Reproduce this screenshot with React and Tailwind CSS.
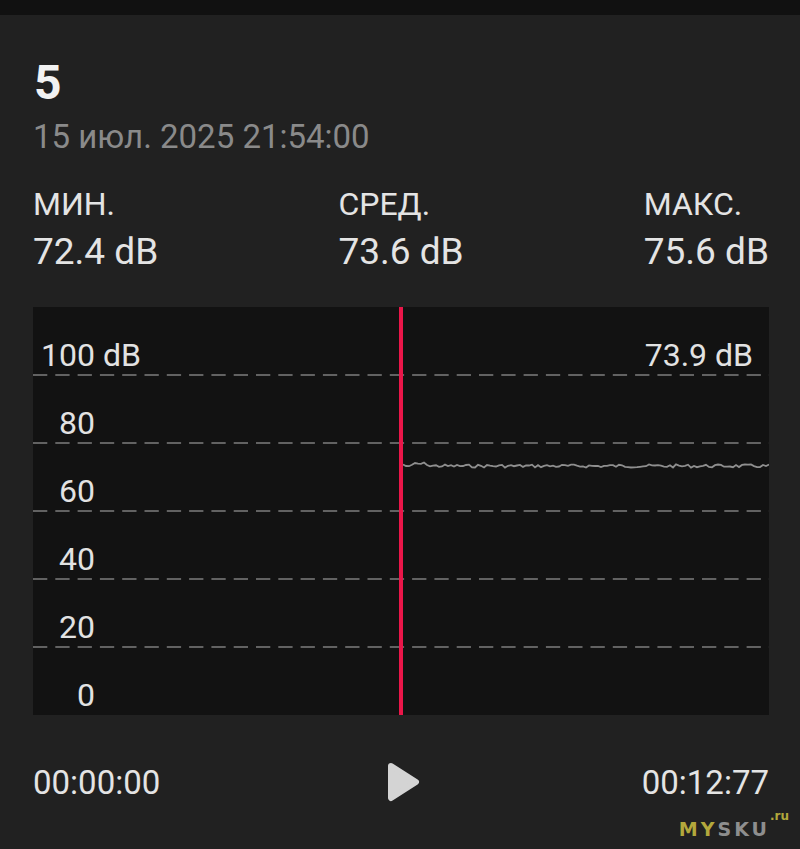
import React from "react";

const font = { fontFamily: "Roboto, 'Noto Sans', sans-serif" };

const levels = ["100", "80", "60", "40", "20", "0"];

function wavePath() {
  // seeded noise so the trace is the same each time
  let seed = 7;
  const rnd = () => {
    seed = (seed * 9301 + 49297) % 233280;
    return seed / 233280;
  };
  let d = "M370 157.5";
  for (let x = 373; x <= 736; x += 3) {
    let y = 159 + (rnd() - 0.5) * 3.2;
    if (x > 380 && x < 395) y -= 2.2;
    d += ` L${x} ${y.toFixed(1)}`;
  }
  return d;
}

function Chart() {
  return (
    <div className="relative h-[408px] bg-[#121212]">
      <svg className="absolute inset-0" width="736" height="408" viewBox="0 0 736 408">
        {[68, 136, 204, 272, 340].map((y) => (
          <line
            key={y}
            x1="0"
            x2="736"
            y1={y}
            y2={y}
            stroke="#7d7d7d"
            strokeWidth="1.5"
            strokeDasharray="14.3 8"
          />
        ))}
        <path d={wavePath()} fill="none" stroke="#8f8f8f" strokeWidth="1.8" />
        <rect x="366" y="0" width="4" height="408" fill="#ea1649" />
      </svg>
      <div className="relative flex flex-col text-[#e2e2e2]">
        {levels.map((v, i) => (
          <div key={v} className="flex h-[68px] items-end pb-[4px] text-[32px] leading-none">
            <span className="w-[62px] text-right">{v}</span>
            {i === 0 && <span className="ml-[8px]">dB</span>}
            {i === 0 && <span className="ml-auto pr-[16px]">73.9 dB</span>}
          </div>
        ))}
      </div>
    </div>
  );
}

function Stat({ label, value }) {
  return (
    <div className="text-[#e4e4e4]">
      <div className="text-[32px] leading-none">{label}</div>
      <div className="mt-[13px] text-[37px] leading-none">{value}</div>
    </div>
  );
}

export default function App() {
  return (
    <div className="relative h-[849px] w-full overflow-hidden bg-[#212121]" style={font}>
      <div className="h-[15px] bg-[#111111]" />
      <div className="pl-[33px] pr-[31px] pt-[44px]">
        <div className="h-[48px] pl-[1px] text-[48px] font-bold leading-none text-[#f2f2f2]">5</div>
        <div className="mt-[13px] text-[33px] leading-none text-[#8a8a8a]">
          15 июл. 2025 21:54:00
        </div>
        <div className="mt-[35px] flex justify-between">
          <Stat label="МИН." value="72.4 dB" />
          <Stat label="СРЕД." value="73.6 dB" />
          <Stat label="МАКС." value="75.6 dB" />
        </div>
        <div className="mt-[37px]">
          <Chart />
        </div>
        <div className="mt-[47px] flex items-center justify-between text-[33px] leading-none text-[#e4e4e4]">
          <span>00:00:00</span>
          <svg width="40" height="40" viewBox="0 0 40 40">
            <polygon
              points="10,4 35,20 10,36"
              fill="#d4d4d4"
              stroke="#d4d4d4"
              strokeWidth="6"
              strokeLinejoin="round"
            />
          </svg>
          <span>00:12:77</span>
        </div>
      </div>
      <div
        className="absolute bottom-[10px] right-[11px] flex items-start text-[19px] font-bold leading-none tracking-[3px]"
        style={{ fontFamily: "'DejaVu Sans', sans-serif" }}
      >
        <span className="text-[#b3a83c]">MY</span>
        <span className="text-[#8e8e8e]">SKU</span>
        <span className="-mt-[10px] text-[12px] tracking-normal text-[#b3a83c]">.ru</span>
      </div>
    </div>
  );
}
